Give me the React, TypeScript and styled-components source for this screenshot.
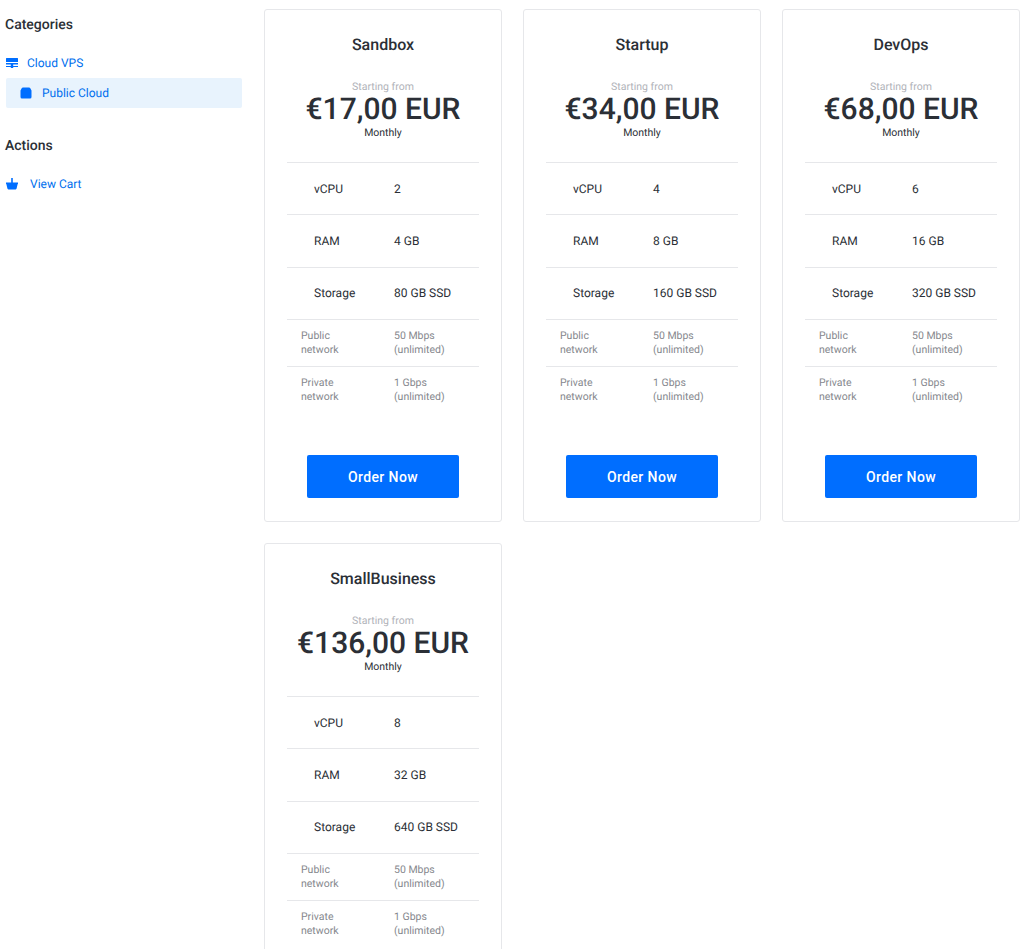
import React from "react";
import styled, { createGlobalStyle } from "styled-components";

const GlobalStyle = createGlobalStyle`
  html, body {
    margin: 0;
    padding: 0;
    background: #fff;
    height: 949px;
    overflow: hidden;
    font-family: Roboto, "Liberation Sans", sans-serif;
    color: #2b2f36;
    text-rendering: geometricPrecision;
  }
`;

const Page = styled.div`
  display: flex;
  align-items: flex-start;
  height: 949px;
  overflow: hidden;
`;

const Sidebar = styled.aside`
  width: 242px;
  flex: none;
  padding-top: 16px;
`;

const SideTitle = styled.h3<{ $top?: number }>`
  margin: ${(p) => p.$top ?? 0}px 0 0 5px;
  font-size: 14px;
  line-height: 19px;
  font-weight: 500;
  color: #2b2f36;
`;

const SideList = styled.div`
  margin: 13px 0 0 6px;
  display: flex;
  flex-direction: column;
`;

const SideLink = styled.a<{ $active?: boolean; $gap: number }>`
  display: flex;
  align-items: center;
  gap: ${(p) => p.$gap}px;
  height: 30px;
  font-size: 12px;
  color: #006fee;
  border-radius: 2px;
  padding-left: ${(p) => (p.$active ? 14 : 0)}px;
  background: ${(p) => (p.$active ? "#e8f3fd" : "transparent")};
  svg {
    flex: none;
    fill: #006eff;
  }
`;

const Grid = styled.main`
  margin-left: 22px;
  display: grid;
  grid-template-columns: repeat(3, 238px);
  column-gap: 21px;
  row-gap: 21px;
  padding-top: 9px;
`;

const Card = styled.section`
  box-sizing: border-box;
  width: 238px;
  height: 513px;
  border: 1px solid #e6e7ea;
  border-radius: 3px;
  padding: 24px 22px 0;
  display: flex;
  flex-direction: column;
  align-items: stretch;
`;

const Name = styled.h2`
  margin: 0;
  font-size: 16px;
  line-height: 22px;
  font-weight: 500;
  text-align: center;
  color: #2b2f36;
`;

const Starting = styled.div`
  margin-top: 24px;
  font-size: 10.5px;
  line-height: 14px;
  text-align: center;
  color: #b1b3b9;
`;

const Price = styled.div`
  font-size: 30px;
  line-height: 31px;
  font-weight: 500;
  text-align: center;
  white-space: nowrap;
  color: #2b2f36;
`;

const Cycle = styled.div`
  font-size: 10.5px;
  line-height: 15px;
  text-align: center;
  color: #2b2f36;
`;

const Specs = styled.div`
  margin-top: 22px;
`;

const SpecRow = styled.div<{ $small?: boolean }>`
  display: grid;
  grid-template-columns: ${(p) => (p.$small ? "93px 1fr" : "107px 1fr")};
  align-items: center;
  box-sizing: border-box;
  height: ${(p) => (p.$small ? 47 : 52.4)}px;
  padding-left: ${(p) => (p.$small ? 14 : 0)}px;
  border-top: 1px solid #e6e7ea;
  font-size: ${(p) => (p.$small ? 10.5 : 12)}px;
  line-height: 14px;
  color: ${(p) => (p.$small ? "#85878d" : "#2b2f36")};
`;

const SpecLabel = styled.span<{ $small?: boolean }>`
  padding-left: ${(p) => (p.$small ? 0 : 27)}px;
`;

const OrderButton = styled.button`
  align-self: center;
  margin-top: 42.3px;
  width: 151.2px;
  height: 43px;
  border: none;
  border-radius: 2px;
  background: #006eff;
  color: #fff;
  font-family: inherit;
  font-size: 14px;
  font-weight: 500;
  letter-spacing: 0.4px;
`;

const plans = [
  { name: "Sandbox", price: "€17,00 EUR", cpu: "2", ram: "4 GB", disk: "80 GB SSD" },
  { name: "Startup", price: "€34,00 EUR", cpu: "4", ram: "8 GB", disk: "160 GB SSD" },
  { name: "DevOps", price: "€68,00 EUR", cpu: "6", ram: "16 GB", disk: "320 GB SSD" },
  { name: "SmallBusiness", price: "€136,00 EUR", cpu: "8", ram: "32 GB", disk: "640 GB SSD" },
];

const ServerIcon = () => (
  <svg width="12" height="10" viewBox="0 0 12 10">
    <path d="M.500 0h11a.500.500 0 0 1 .500.500V4H0V.500A.500.500 0 0 1 .500 0zM0 5h12v1.600H7.200V8H12v1H7.200v1H4.800V9H0V8h4.800V6.600H0z" />
  </svg>
);

const BoxIcon = () => (
  <svg width="12" height="12" viewBox="0 0 12 12">
    <path d="M3 .500h6a1.500 1.500 0 0 1 1.300.800L11.500 3.500V10a1.500 1.500 0 0 1-1.500 1.500H2A1.500 1.500 0 0 1 .500 10V3.500l1.200-2.200A1.500 1.500 0 0 1 3 .500z" />
  </svg>
);

const BasketIcon = () => (
  <svg width="12" height="12" viewBox="0 0 12 12">
    <path d="M5.200 0h1.600v4.600H12v1.200c0 .300-.200.500-.400.500l-1 4.300a1 1 0 0 1-1 .800H2.400a1 1 0 0 1-1-.800L.400 6.300C.200 6.300 0 6.100 0 5.800V4.600h5.200z" />
  </svg>
);

const Plan = ({ plan }: { plan: (typeof plans)[number] }) => (
  <Card>
    <Name>{plan.name}</Name>
    <Starting>Starting from</Starting>
    <Price>{plan.price}</Price>
    <Cycle>Monthly</Cycle>
    <Specs>
      <SpecRow><SpecLabel>vCPU</SpecLabel><span>{plan.cpu}</span></SpecRow>
      <SpecRow><SpecLabel>RAM</SpecLabel><span>{plan.ram}</span></SpecRow>
      <SpecRow><SpecLabel>Storage</SpecLabel><span>{plan.disk}</span></SpecRow>
      <SpecRow $small><SpecLabel $small>Public<br />network</SpecLabel><span>50 Mbps<br />(unlimited)</span></SpecRow>
      <SpecRow $small><SpecLabel $small>Private<br />network</SpecLabel><span>1 Gbps<br />(unlimited)</span></SpecRow>
    </Specs>
    <OrderButton>Order Now</OrderButton>
  </Card>
);

export default function App() {
  return (
    <Page>
      <GlobalStyle />
      <Sidebar>
        <SideTitle>Categories</SideTitle>
        <SideList>
          <SideLink $gap={9}><ServerIcon />Cloud VPS</SideLink>
          <SideLink $active $gap={10}><BoxIcon />Public Cloud</SideLink>
        </SideList>
        <SideTitle $top={29}>Actions</SideTitle>
        <SideList>
          <SideLink $gap={12}><BasketIcon />View Cart</SideLink>
        </SideList>
      </Sidebar>
      <Grid>
        {plans.map((plan) => (
          <Plan key={plan.name} plan={plan} />
        ))}
      </Grid>
    </Page>
  );
}
